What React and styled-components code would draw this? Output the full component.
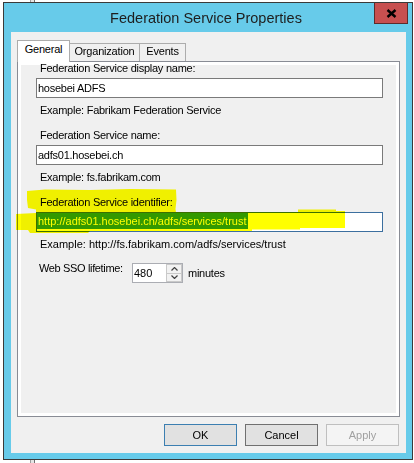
import React from 'react';
import styled, { createGlobalStyle, css } from 'styled-components';

const GlobalStyle = createGlobalStyle`
  html, body {
    margin: 0;
    padding: 0;
  }
  body {
    width: 414px;
    height: 463px;
    overflow: hidden;
    background: linear-gradient(
      to right,
      #fff 0 30px,
      #9c9c9c 30px 31px,
      #e4e4e4 31px 34px,
      #707070 34px 35px,
      #fff 35px
    );
    font-family: "Liberation Sans", Arial, sans-serif;
  }
`;

const Desktop = styled.div`
  position: relative;
  width: 414px;
  height: 463px;
  box-sizing: border-box;
  padding: 2px 0 0 3px;
`;

const Window = styled.div`
  width: 410px;
  height: 458px;
  box-sizing: border-box;
  border: 1px solid #3a3a3a;
  background: #67cbea;
  display: flex;
  flex-direction: column;
  padding-bottom: 6px;
`;

const TitleBar = styled.div`
  height: 29px;
  display: grid;
  grid-template-columns: 1fr auto 1fr;
  padding-right: 4px;
`;

const Title = styled.div`
  grid-column: 2;
  font-size: 14.5px;
  line-height: 29px;
  padding-top: 1px;
  color: #1e1e1e;
  white-space: nowrap;
`;

const CloseButton = styled.div`
  grid-column: 3;
  justify-self: end;
  align-self: start;
  width: 34px;
  height: 21px;
  box-sizing: border-box;
  border: 1px solid #5e2b2b;
  border-top: none;
  background: #c75050;
  display: flex;
  align-items: center;
  justify-content: center;
`;

const Client = styled.div`
  flex: 1;
  margin: 0 6px 0 7px;
  background: #f0f0f0;
  display: flex;
  flex-direction: column;
  padding: 8px 6px 7px 6px;
`;

const TabStrip = styled.div`
  display: flex;
  align-items: flex-end;
  height: 21px;
`;

const Tab = styled.div`
  width: ${({ $width }) => $width}px;
  box-sizing: border-box;
  border: 1px solid #acacac;
  border-bottom: none;
  font-size: 11px;
  line-height: 13px;
  letter-spacing: -0.2px;
  text-align: center;
  color: #000;
  background: #f0f0f0;
  height: 18px;
  padding-top: 1px;
  margin-left: -1px;

  ${({ $active }) =>
    $active &&
    css`
      position: relative;
      z-index: 1;
      margin-left: 0;
      height: 22px;
      margin-bottom: -1px;
      padding-top: 2px;
      background: #fff;
    `};
`;

const Panel = styled.div`
  height: 356px;
  box-sizing: border-box;
  border: 1px solid #898c95;
  background: #fff;
  padding: 3px;
  display: flex;
`;

const Page = styled.div`
  flex: 1;
  background: #f0f0f0;
  padding-left: 15px;
  display: flex;
  flex-direction: column;
`;

const Label = styled.div`
  font-size: 11px;
  line-height: 13px;
  letter-spacing: ${({ $wide }) => ($wide ? '0' : '-0.25px')};
  color: #000;
  margin-left: 4px;
  white-space: nowrap;
`;

const FieldLabel = styled(Label)`
  margin-bottom: 3px;

  &:first-child {
    margin-top: -3px;
  }
`;

const Example = styled(Label)`
  margin-top: 6px;
  margin-bottom: 12px;
`;

const TextBox = styled.div`
  width: 347px;
  height: 20px;
  box-sizing: border-box;
  border: 1px solid ${({ $focused }) => ($focused ? '#3c6f9f' : '#7a7a7a')};
  background: #fff;
  padding-left: 1px;
  font-size: 11px;
  line-height: 18px;
  letter-spacing: ${({ $wide }) => ($wide ? '0' : '-0.25px')};
  color: #000;
  white-space: nowrap;
  overflow: hidden;
`;

const Selection = styled.span`
  display: inline-block;
  vertical-align: top;
  line-height: 16px;
  margin-left: -1px;
  padding: 0 1px;
  background: #3399ff;
  color: #fff;
`;

const SpinRow = styled.div`
  display: flex;
  align-items: center;
`;

const SpinLabel = styled(Label)`
  width: 93px;
  margin-left: 3px;
  align-self: flex-start;
  margin-top: -1px;
  letter-spacing: -0.35px;
`;

const Spinner = styled.div`
  width: 51px;
  height: 20px;
  box-sizing: border-box;
  border: 1px solid #abadb3;
  background: #fff;
  display: flex;
`;

const SpinValue = styled.div`
  flex: 1;
  padding-left: 1px;
  font-size: 11px;
  line-height: 18px;
  color: #000;
`;

const SpinArrows = styled.div`
  width: 16px;
  display: flex;
  flex-direction: column;
`;

const SpinArrow = styled.div`
  flex: 1;
  box-sizing: border-box;
  border: 1px solid #c9c9c9;
  border-top: ${({ $down }) => ($down ? 'none' : '1px solid #c9c9c9')};
  background: #f2f2f2;
  display: flex;
  align-items: center;
  justify-content: center;
`;

const Unit = styled(Label)`
  margin-left: 5px;
`;

const ButtonRow = styled.div`
  display: flex;
  justify-content: flex-end;
  gap: 8px;
  margin-top: 7px;
  padding-right: 1px;
`;

const Button = styled.div`
  width: 73px;
  height: 22px;
  box-sizing: border-box;
  border: 1px solid #707070;
  background: #e1e1e1;
  font-size: 11px;
  line-height: 20px;
  text-align: center;
  color: #000;

  ${({ $default }) =>
    $default &&
    css`
      border-color: #3c7fb1;
    `};

  ${({ $disabled }) =>
    $disabled &&
    css`
      border-color: #bfbfbf;
      background: #f4f4f4;
      color: #a0a0a0;
    `};
`;

const Marker = styled.svg`
  position: absolute;
  top: 0;
  left: 0;
  pointer-events: none;
  mix-blend-mode: multiply;
`;

const CloseIcon = () => (
  <svg width="11" height="9" viewBox="0 0 11 9">
    <path d="M1.5 1 L9.5 8 M9.5 1 L1.5 8" stroke="#000" strokeWidth="2.4" />
  </svg>
);

const Chevron = ({ down }) => (
  <svg width="7" height="4" viewBox="0 0 7 4">
    <polyline
      points={down ? '0.5,0.5 3.5,3.5 6.5,0.5' : '0.5,3.5 3.5,0.5 6.5,3.5'}
      fill="none"
      stroke="#404040"
      strokeWidth="1.2"
    />
  </svg>
);

const App = () => (
  <>
    <GlobalStyle />
    <Desktop>
      <Window>
        <TitleBar>
          <Title>Federation Service Properties</Title>
          <CloseButton>
            <CloseIcon />
          </CloseButton>
        </TitleBar>
        <Client>
          <TabStrip>
            <Tab $active $width={53}>General</Tab>
            <Tab $width={71}>Organization</Tab>
            <Tab $width={47}>Events</Tab>
          </TabStrip>
          <Panel>
            <Page>
              <FieldLabel>Federation Service display name:</FieldLabel>
              <TextBox>hosebei ADFS</TextBox>
              <Example>Example: Fabrikam Federation Service</Example>

              <FieldLabel>Federation Service name:</FieldLabel>
              <TextBox>adfs01.hosebei.ch</TextBox>
              <Example>Example: fs.fabrikam.com</Example>

              <FieldLabel>Federation Service identifier:</FieldLabel>
              <TextBox $focused $wide>
                <Selection>http://adfs01.hosebei.ch/adfs/services/trust</Selection>
              </TextBox>
              <Example $wide>Example: http://fs.fabrikam.com/adfs/services/trust</Example>

              <SpinRow>
                <SpinLabel>Web SSO lifetime:</SpinLabel>
                <Spinner>
                  <SpinValue>480</SpinValue>
                  <SpinArrows>
                    <SpinArrow>
                      <Chevron />
                    </SpinArrow>
                    <SpinArrow $down>
                      <Chevron down />
                    </SpinArrow>
                  </SpinArrows>
                </Spinner>
                <Unit>minutes</Unit>
              </SpinRow>
            </Page>
          </Panel>
          <ButtonRow>
            <Button $default>OK</Button>
            <Button>Cancel</Button>
            <Button $disabled>Apply</Button>
          </ButtonRow>
        </Client>
      </Window>

      {/* yellow highlighter strokes drawn over the dialog */}
      <Marker width="414" height="463" viewBox="0 0 414 463">
        <path
          d="M27 191 L45 189.5 L90 190 L130 189 L176 189.5 L176.5 200 L175.5 209 L176 212.5 L36 212.5 L36 209.5 L28 208 L27 200 Z"
          fill="#ffff00"
        />
        <path
          d="M16 214 L36 213 L36 212 L298 212 L298 209.5 L336 209.5 L336 211 L345 211 L345 228 L300 228 L300 229.5 L252 229.5 L252 231 L90 231 L88 233 L30 233 L28 230 L16 230 Z"
          fill="#ffff00"
        />
      </Marker>
    </Desktop>
  </>
);

export default App;
